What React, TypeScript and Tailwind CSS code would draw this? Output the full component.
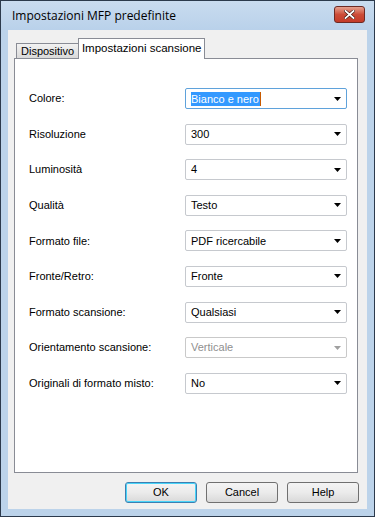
import React from "react";

type Row = { label: string; value: string; focused?: boolean; disabled?: boolean };

const rows: Row[] = [
  { label: "Colore:", value: "Bianco e nero", focused: true },
  { label: "Risoluzione", value: "300" },
  { label: "Luminosità", value: "4" },
  { label: "Qualità", value: "Testo" },
  { label: "Formato file:", value: "PDF ricercabile" },
  { label: "Fronte/Retro:", value: "Fronte" },
  { label: "Formato scansione:", value: "Qualsiasi" },
  { label: "Orientamento scansione:", value: "Verticale", disabled: true },
  { label: "Originali di formato misto:", value: "No" },
];

const Arrow = ({ disabled }: { disabled?: boolean }) => (
  <svg width="7" height="4" viewBox="0 0 7 4" className="shrink-0">
    <path d="M0 0h7L3.5 4z" fill={disabled ? "#a0a0a0" : "#000"} />
  </svg>
);

const Select = ({ row }: { row: Row }) => (
  <div
    className={
      "w-[162px] h-[21px] bg-white border rounded-[2px] flex items-center pl-[5px] pr-[5px] " +
      (row.focused
        ? "border-[#5fa2db]"
        : row.disabled
        ? "border-[#c9c9c9]"
        : "border-[#c6c9ce]")
    }
  >
    <div className="flex-1 flex items-center">
      {row.focused ? (
        <span className="bg-[#3399ff] text-white leading-[14px] pr-[1px] border-r border-[#c85a00]">
          {row.value}
        </span>
      ) : (
        <span className={row.disabled ? "text-[#8f8f8f]" : "text-black"}>{row.value}</span>
      )}
    </div>
    <Arrow disabled={row.disabled} />
  </div>
);

const Button = ({ label, primary }: { label: string; primary?: boolean }) => (
  <button
    className={
      "w-[72px] h-[21px] rounded-[3px] border text-black bg-gradient-to-b from-[#f4f4f4] via-[#ebebeb] to-[#d9d9d9] " +
      (primary ? "border-[#3c7fb1] shadow-[inset_0_0_0_1px_#48d4f9]" : "border-[#707070]")
    }
  >
    {label}
  </button>
);

export default function App() {
  return (
    <div
      className="w-[375px] h-[517px] bg-[#bcd3ea] border border-[#2c3a4c] flex flex-col text-[11px]"
      style={{ fontFamily: '"Liberation Sans", Arial, sans-serif' }}
    >
      {/* title bar */}
      <div className="h-[29px] flex items-center justify-between pl-[11px] pr-[9px] bg-gradient-to-b from-[#c9dcef] to-[#b9d1ea]">
        <span className="text-[12px] text-black" style={{ fontFamily: '"Open Sans", "Liberation Sans", sans-serif' }}>
          Impostazioni MFP predefinite
        </span>
        <div className="w-[31px] h-[17px] mt-[-2px] rounded-[3px] border border-[#6d2a24] bg-gradient-to-b from-[#e4a08f] via-[#cc4c38] to-[#c43b28] flex items-center justify-center">
          <svg width="11" height="9" viewBox="0 0 11 9">
            <path d="M1.5 1l8 7M9.5 1l-8 7" stroke="#3a1410" strokeWidth="3" strokeLinecap="square" />
            <path d="M1.5 1l8 7M9.5 1l-8 7" stroke="#fff" strokeWidth="1.8" strokeLinecap="square" />
          </svg>
        </div>
      </div>

      {/* client area */}
      <div className="flex-1 mx-[7px] mb-[7px] bg-[#f0f0f0] flex flex-col pl-[6px] pr-[9px]">
        {/* tabs */}
        <div className="flex items-end h-[28px] pl-[2px]">
          <div className="h-[15px] px-[4px] border border-b-0 border-[#898c95] bg-gradient-to-b from-[#f2f2f2] to-[#d9d9d9] flex items-center text-black">
            Dispositivo
          </div>
          <div className="h-[21px] w-[127px] ml-[-1px] mb-[-1px] border border-b-0 border-[#898c95] bg-white relative z-10 flex items-center justify-center text-black text-[11.5px]">
            Impostazioni scansione
          </div>
        </div>
        <div className="h-[415px] border border-[#898c95] bg-white pt-[29px] pl-[14px] flex flex-col gap-[14.6px]">
          {rows.map((row, i) => (
            <div key={i} className="flex items-center">
              <span className="w-[156px] text-black">{row.label}</span>
              <Select row={row} />
            </div>
          ))}
        </div>
        <div className="flex justify-end gap-[9px] pt-[9px] mr-[-1px]">
          <Button label="OK" primary />
          <Button label="Cancel" />
          <Button label="Help" />
        </div>
      </div>
    </div>
  );
}
